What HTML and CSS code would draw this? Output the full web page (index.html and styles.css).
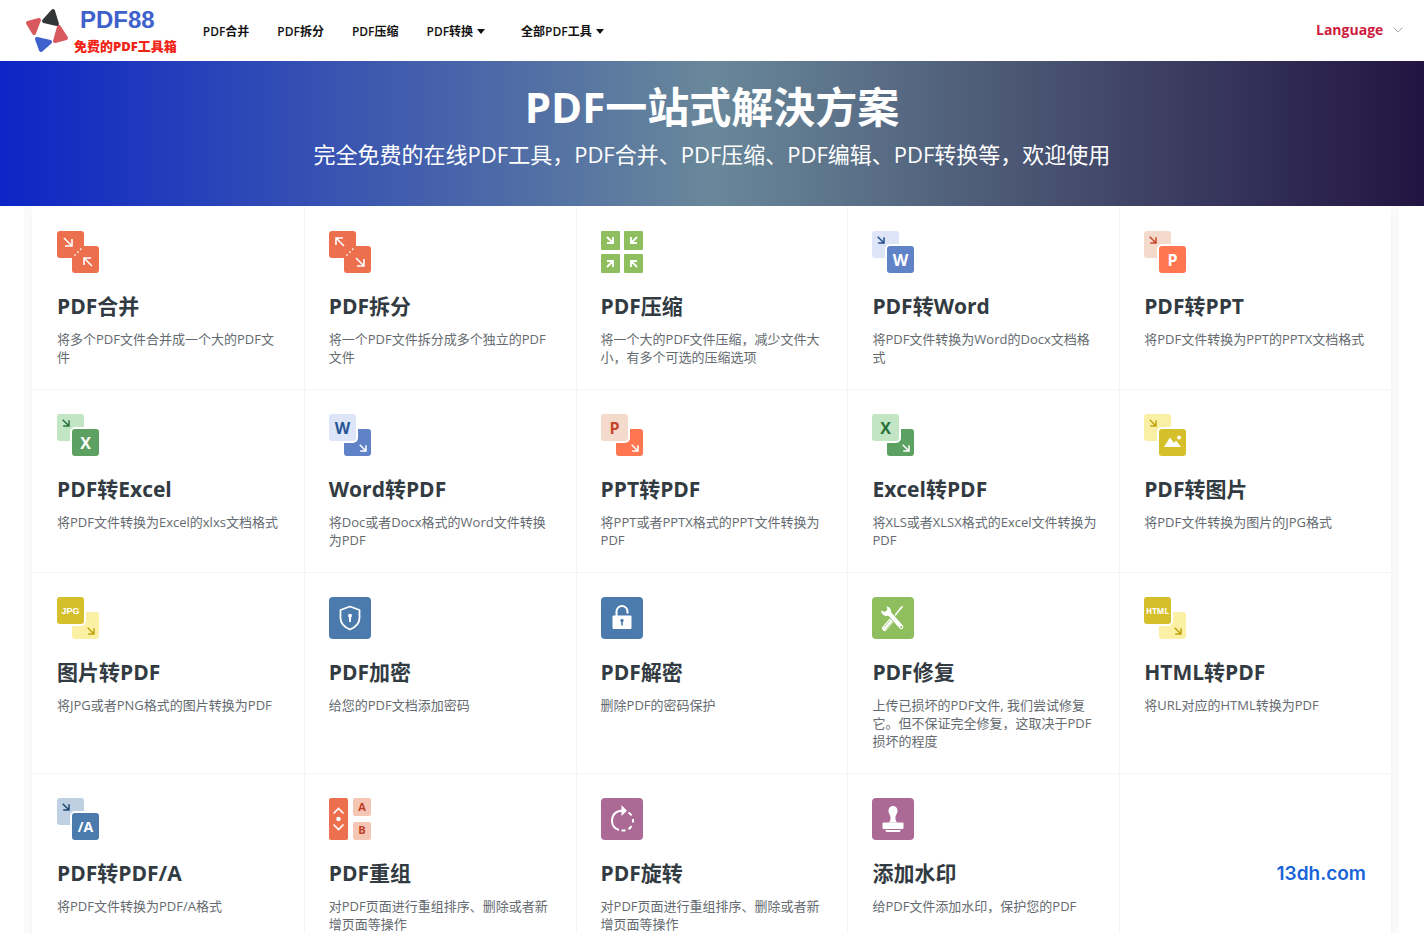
FILE: index.html
```
<!DOCTYPE html>
<html lang="zh-CN">
<head>
    <meta charset="UTF-8">
    <meta name="viewport" content="width=device-width, initial-scale=1.0">
    <title>PDF88 - 免费的PDF工具箱</title>
    <link rel="stylesheet" href="styles.css">
</head>
<body>
    <!-- shared icon parts -->
    <svg class="defs" width="0" height="0" aria-hidden="true">
        <symbol id="arrow" viewBox="0 0 8 8"><path d="M.7.7 7 7M7 1.2V7H1.2" fill="none" stroke="currentColor" stroke-width="1.5"/></symbol>
        <symbol id="caret" viewBox="0 0 8 5"><path d="M0 0h8L4 5z" fill="currentColor"/></symbol>
    </svg>

    <header class="header">
        <a class="logo" href="#">
            <svg width="44" height="46" viewBox="0 0 44 46">
                <g stroke-width="4" stroke-linejoin="round">
                    <path d="M19 13 28 3 32 16z" fill="#343536" stroke="#343536"/>
                    <path d="M3 15 14 12 9 25z" fill="#d95a5e" stroke="#d95a5e"/>
                    <path d="M34 19 41 30 30 33z" fill="#d95a5e" stroke="#d95a5e"/>
                    <path d="M12 31 25 34 16 42z" fill="#3f61cb" stroke="#3f61cb"/>
                </g>
            </svg>
            <span class="logo-text">
                <span class="logo-name">PDF88</span>
                <span class="logo-slogan">免费的PDF工具箱</span>
            </span>
        </a>
        <nav class="nav">
            <a href="#">PDF合并</a>
            <a href="#">PDF拆分</a>
            <a href="#">PDF压缩</a>
            <button type="button">PDF转换<svg width="8" height="5"><use href="#caret"/></svg></button>
            <button type="button">全部PDF工具<svg width="8" height="5"><use href="#caret"/></svg></button>
        </nav>
        <label class="language">
            <select aria-label="Language">
                <option>Language</option>
            </select>
            <svg width="10" height="6" viewBox="0 0 10 6"><path d="M.5.5 5 5 9.5.5" fill="none" stroke="#a4a6ab"/></svg>
        </label>
    </header>

    <section class="banner">
        <h1>PDF一站式解決方案</h1>
        <p>完全免费的在线PDF工具，PDF合并、PDF压缩、PDF编辑、PDF转换等，欢迎使用</p>
    </section>

    <main class="tools">
        <a class="tool" href="#">
            <svg class="icon" viewBox="0 0 42 42">
                <path d="M3 0h21q3 0 3 3v12h12q3 0 3 3v21q0 3-3 3H18q-3 0-3-3V27H3q-3 0-3-3V3q0-3 3-3z" fill="#ec6f4e"/>
                <path d="m7 7 8 8m0-7v7H8M35 35l-8-8m0 7v-7h7" fill="none" stroke="#fff" stroke-width="1.6"/>
                <path d="m17.500 24.500 7-7" stroke="#fff" stroke-width="1.5" stroke-dasharray="1.5 2.600"/>
            </svg>
            <h3>PDF合并</h3>
            <p>将多个PDF文件合并成一个大的PDF文<br>件</p>
        </a>
        <a class="tool" href="#">
            <svg class="icon" viewBox="0 0 42 42">
                <path d="M3 0h21q3 0 3 3v12h12q3 0 3 3v21q0 3-3 3H18q-3 0-3-3V27H3q-3 0-3-3V3q0-3 3-3z" fill="#ec6f4e"/>
                <path d="M15 15 7 7m0 7V7h7M27 27l8 8m0-7v7h-7" fill="none" stroke="#fff" stroke-width="1.6"/>
                <path d="m17.500 24.500 7-7" stroke="#fff" stroke-width="1.5" stroke-dasharray="1.5 2.600"/>
            </svg>
            <h3>PDF拆分</h3>
            <p>将一个PDF文件拆分成多个独立的PDF<br>文件</p>
        </a>
        <a class="tool" href="#">
            <svg class="icon" viewBox="0 0 42 42">
                <path d="M1 1h17v17H1zM24 1h17v17H24zM1 24h17v17H1zM24 24h17v17H24z" fill="#8fbe5f" stroke="#8fbe5f" stroke-width="2" stroke-linejoin="round"/>
                <path d="m6 6 6 6m0-6v6H6M36 6l-6 6m0-6v6h6M6 36l6-6m0 6v-6H6M36 36l-6-6m0 6v-6h6" fill="none" stroke="#fff" stroke-width="1.8"/>
            </svg>
            <h3>PDF压缩</h3>
            <p>将一个大的PDF文件压缩，减少文件大<br>小，有多个可选的压缩选项</p>
        </a>
        <a class="tool" href="#">
            <svg class="icon" viewBox="0 0 42 42">
                <rect width="27" height="27" rx="3" fill="#dee5f9"/>
                <use href="#arrow" x="5" y="5" width="8" height="8" color="#23508f"/>
                <rect class="front" x="14" y="14" width="29" height="29" rx="4" fill="#5f83c6"/>
                <text x="28.5" y="35" fill="#fff">W</text>
            </svg>
            <h3>PDF转Word</h3>
            <p>将PDF文件转换为Word的Docx文档格<br>式</p>
        </a>
        <a class="tool" href="#">
            <svg class="icon" viewBox="0 0 42 42">
                <rect width="27" height="27" rx="3" fill="#f4daca"/>
                <use href="#arrow" x="5" y="5" width="8" height="8" color="#c6472b"/>
                <rect class="front" x="14" y="14" width="29" height="29" rx="4" fill="#ff7651"/>
                <text x="28.5" y="35" fill="#fff">P</text>
            </svg>
            <h3>PDF转PPT</h3>
            <p>将PDF文件转换为PPT的PPTX文档格式</p>
        </a>

        <a class="tool" href="#">
            <svg class="icon" viewBox="0 0 42 42">
                <rect width="27" height="27" rx="3" fill="#c2e6c3"/>
                <use href="#arrow" x="5" y="5" width="8" height="8" color="#28713a"/>
                <rect class="front" x="14" y="14" width="29" height="29" rx="4" fill="#5da162"/>
                <text x="28.5" y="35" fill="#fff">X</text>
            </svg>
            <h3>PDF转Excel</h3>
            <p>将PDF文件转换为Excel的xlxs文档格式</p>
        </a>
        <a class="tool" href="#">
            <svg class="icon" viewBox="0 0 42 42">
                <rect x="15" y="15" width="27" height="27" rx="3" fill="#5f83c6"/>
                <use href="#arrow" x="30" y="30" width="8" height="8" color="#fff"/>
                <rect class="front" x="-1" y="-1" width="29" height="29" rx="4" fill="#dee5f9"/>
                <text x="13.5" y="20" fill="#275596">W</text>
            </svg>
            <h3>Word转PDF</h3>
            <p>将Doc或者Docx格式的Word文件转换<br>为PDF</p>
        </a>
        <a class="tool" href="#">
            <svg class="icon" viewBox="0 0 42 42">
                <rect x="15" y="15" width="27" height="27" rx="3" fill="#ff7651"/>
                <use href="#arrow" x="30" y="30" width="8" height="8" color="#fff"/>
                <rect class="front" x="-1" y="-1" width="29" height="29" rx="4" fill="#f4daca"/>
                <text x="13.5" y="20" fill="#c6472b">P</text>
            </svg>
            <h3>PPT转PDF</h3>
            <p>将PPT或者PPTX格式的PPT文件转换为<br>PDF</p>
        </a>
        <a class="tool" href="#">
            <svg class="icon" viewBox="0 0 42 42">
                <rect x="15" y="15" width="27" height="27" rx="3" fill="#5da162"/>
                <use href="#arrow" x="30" y="30" width="8" height="8" color="#fff"/>
                <rect class="front" x="-1" y="-1" width="29" height="29" rx="4" fill="#c2e6c3"/>
                <text x="13.5" y="20" fill="#28713a">X</text>
            </svg>
            <h3>Excel转PDF</h3>
            <p>将XLS或者XLSX格式的Excel文件转换为<br>PDF</p>
        </a>
        <a class="tool" href="#">
            <svg class="icon" viewBox="0 0 42 42">
                <rect width="27" height="27" rx="3" fill="#faf0a5"/>
                <use href="#arrow" x="5" y="5" width="8" height="8" color="#c0a20b"/>
                <rect class="front" x="14" y="14" width="29" height="29" rx="4" fill="#d5c02c"/>
                <path d="m20 33 6-9.500 4 5.500 2-2.500 5 6.500z" fill="#fff"/>
                <circle cx="35" cy="23.5" r="1.900" fill="#fff"/>
            </svg>
            <h3>PDF转图片</h3>
            <p>将PDF文件转换为图片的JPG格式</p>
        </a>

        <a class="tool" href="#">
            <svg class="icon" viewBox="0 0 42 42">
                <rect x="15" y="15" width="27" height="27" rx="3" fill="#fcf0a4"/>
                <use href="#arrow" x="30" y="30" width="8" height="8" color="#c0a20b"/>
                <rect class="front" x="-1" y="-1" width="29" height="29" rx="4" fill="#d5c02c"/>
                <text class="wide" x="13.5" y="17" fill="#fff">JPG</text>
            </svg>
            <h3>图片转PDF</h3>
            <p>将JPG或者PNG格式的图片转换为PDF</p>
        </a>
        <a class="tool" href="#">
            <svg class="icon" viewBox="0 0 42 42">
                <rect width="42" height="42" rx="4" fill="#4b7bac"/>
                <path d="m21 9.5 9.500 3.500v8q0 7.500-9.500 11.500Q11.500 28.500 11.500 21v-8z" fill="none" stroke="#fff" stroke-width="1.8" stroke-linejoin="round"/>
                <circle cx="21" cy="18.8" r="2" fill="#fff"/>
                <path d="M20 19h2v6h-2z" fill="#fff"/>
            </svg>
            <h3>PDF加密</h3>
            <p>给您的PDF文档添加密码</p>
        </a>
        <a class="tool" href="#">
            <svg class="icon" viewBox="0 0 42 42">
                <rect width="42" height="42" rx="4" fill="#4b7bac"/>
                <path d="M15.500 19v-4.500a5.500 5.500 0 0 1 11 0v2" fill="none" stroke="#fff" stroke-width="2"/>
                <rect x="11.5" y="18.5" width="19" height="13.5" rx="1" fill="#fff"/>
                <circle cx="21" cy="23.5" r="1.7" fill="#4b7bac"/>
                <path d="M20.200 24h1.600v4.500h-1.600z" fill="#4b7bac"/>
            </svg>
            <h3>PDF解密</h3>
            <p>删除PDF的密码保护</p>
        </a>
        <a class="tool" href="#">
            <svg class="icon" viewBox="0 0 42 42">
                <rect width="42" height="42" rx="4" fill="#8fbe5f"/>
                <path d="m19 24-6.500 7.500" stroke="#fff" stroke-width="5" stroke-linecap="round"/>
                <path d="m18 23.500-6 7M20.500 25 14 32.500" stroke="#8fbe5f" stroke-width=".7"/>
                <path d="m21 21 7.500-9.500" stroke="#fff" stroke-width="1.5"/>
                <path d="m27.500 12.500.5-2 2.500-1.800.7.700-1.700 2.600z" fill="#fff"/>
                <path d="m17 16 13 14.500" stroke="#8fbe5f" stroke-width="6"/>
                <path d="m16 15 13.300 15" stroke="#fff" stroke-width="4.200" stroke-linecap="round"/>
                <path d="M14.500 9.200a5.200 5.200 0 0 1 3.500 8.300 5.200 5.200 0 0 1-8.800-3.900l3.800 1.400 2.500-2.300z" fill="#fff"/>
                <circle cx="29.300" cy="30" r="1.100" fill="#8fbe5f"/>
            </svg>
            <h3>PDF修复</h3>
            <p>上传已损坏的PDF文件, 我们尝试修复<br>它。但不保证完全修复，这取决于PDF<br>损坏的程度</p>
        </a>
        <a class="tool" href="#">
            <svg class="icon" viewBox="0 0 42 42">
                <rect x="15" y="15" width="27" height="27" rx="3" fill="#fcf0a4"/>
                <use href="#arrow" x="30" y="30" width="8" height="8" color="#c0a20b"/>
                <rect class="front" x="-1" y="-1" width="29" height="29" rx="4" fill="#d5c02c"/>
                <text class="small" x="13.5" y="16.5" fill="#fff">HTML</text>
            </svg>
            <h3>HTML转PDF</h3>
            <p>将URL对应的HTML转换为PDF</p>
        </a>

        <a class="tool" href="#">
            <svg class="icon" viewBox="0 0 42 42">
                <rect width="27" height="27" rx="3" fill="#bfd0e2"/>
                <use href="#arrow" x="5" y="5" width="8" height="8" color="#1f4a70"/>
                <rect class="front" x="14" y="14" width="29" height="29" rx="4" fill="#4b7bac"/>
                <text class="medium" x="28.5" y="34" fill="#fff">/A</text>
            </svg>
            <h3>PDF转PDF/A</h3>
            <p>将PDF文件转换为PDF/A格式</p>
        </a>
        <a class="tool" href="#">
            <svg class="icon" viewBox="0 0 42 42">
                <rect width="19" height="42" rx="2" fill="#ec6f4e"/>
                <path d="m4.500 15.500 5-5 5 5m-10 11 5 5 5-5" fill="none" stroke="#fff" stroke-width="1.6"/>
                <circle cx="9.500" cy="21" r="2.300" fill="#fff"/>
                <rect x="24" width="18" height="18" rx="2" fill="#f6c6b4"/>
                <rect x="24" y="24" width="18" height="18" rx="2" fill="#f6c6b4"/>
                <text class="letter" x="33" y="13" fill="#bf3d27">A</text>
                <text class="letter" x="33" y="36" fill="#bf3d27">B</text>
            </svg>
            <h3>PDF重组</h3>
            <p>对PDF页面进行重组排序、删除或者新<br>增页面等操作</p>
        </a>
        <a class="tool" href="#">
            <svg class="icon" viewBox="0 0 42 42">
                <rect width="42" height="42" rx="4" fill="#ab6a96"/>
                <path d="M18 32q-7-2-7-9.500Q11.500 13 22 12.500" fill="none" stroke="#fff" stroke-width="2"/>
                <path d="m20.500 7 5.500 5.700-5.500 5.300z" fill="#fff"/>
                <path d="M27.500 14.500q2 1.300 3 3M32 21v3.500M30.500 28q-1 2-3 3M24.500 32.300q-2 .5-4 .2" fill="none" stroke="#fff" stroke-width="2"/>
            </svg>
            <h3>PDF旋转</h3>
            <p>对PDF页面进行重组排序、删除或者新<br>增页面等操作</p>
        </a>
        <a class="tool" href="#">
            <svg class="icon" viewBox="0 0 42 42">
                <rect width="42" height="42" rx="4" fill="#ab6a96"/>
                <path d="M21 8a4.500 4.500 0 0 1 4.500 5c0 3-2.500 4-2 8 .2 2 1 3 2 3.500h-9c1-.5 1.800-1.500 2-3.500.5-4-2-5-2-8A4.500 4.500 0 0 1 21 8z" fill="#fff"/>
                <rect x="10.5" y="24.5" width="21" height="6.5" rx="1" fill="#fff"/>
                <path d="M13 32h16l-1.500 2h-13z" fill="#fff"/>
            </svg>
            <h3>添加水印</h3>
            <p>给PDF文件添加水印，保护您的PDF</p>
        </a>
        <div class="tool tool-site">
            <a href="#">13dh.com</a>
        </div>
    </main>
</body>
</html>
```
FILE: styles.css
```
* {
    box-sizing: border-box;
}
body {
    margin: 0;
    font-family: "Open Sans", "Noto Sans CJK SC", sans-serif;
    background-color: #fff;
    color: #333b42;
}
h1, h3, p {
    margin: 0;
}
a {
    color: inherit;
    text-decoration: none;
}
.defs {
    position: absolute;
}
.header {
    display: flex;
    align-items: center;
    min-height: 61px;
    padding: 0 21px 0 25px;
}
.logo {
    display: flex;
    align-items: center;
    gap: 5px;
}
.logo-text {
    display: flex;
    flex-direction: column;
}
.logo-name {
    padding-left: 6px;
    font: bold 24px/30px "Liberation Sans", sans-serif;
    color: #3f61cb;
}
.logo-slogan {
    font-size: 13px;
    line-height: 22px;
    font-weight: 900;
    color: #f02416;
}
.nav {
    display: flex;
    align-items: center;
    gap: 28px;
    margin-left: 26px;
    padding-top: 2px;
}
.nav a,
.nav button {
    padding: 0;
    border: none;
    background: none;
    font-family: inherit;
    font-size: 12px;
    line-height: 18px;
    font-weight: 600;
    color: #111;
    cursor: pointer;
}
.nav button {
    display: flex;
    align-items: center;
    gap: 4px;
}
.nav button + button {
    margin-left: 8px;
}
.language {
    display: flex;
    align-items: center;
    gap: 9px;
    margin-left: auto;
    padding-bottom: 2px;
}
.language select {
    appearance: none;
    padding: 0;
    border: none;
    background: none;
    font-family: inherit;
    font-size: 14px;
    font-weight: bold;
    color: #cd1c3f;
    cursor: pointer;
}
.banner {
    padding: 16px 20px 34px;
    text-align: center;
    color: #fff;
    background: linear-gradient(90deg, #0d25c6, #69889a 50%, #221442);
}
.banner h1 {
    font-size: 42px;
    line-height: 60px;
    font-weight: bold;
}
.banner p {
    font-size: 22px;
    line-height: 35px;
}
.tools {
    display: grid;
    grid-template-columns: repeat(5, 1fr);
    margin: 0 33px 0 32px;
    background-color: #fff;
    box-shadow: 0 8px 4px 0 #f0f0f0, 0 8px 0 8px #fafafa;
    clip-path: inset(0 -8px -16px -8px);
}
.tool {
    padding: 24px 20px 23px 24px;
    border-top: 1px solid #f5f5f5;
    border-left: 1px solid #f5f5f5;
}
.tool:nth-child(5n + 1) {
    border-left-color: transparent;
}
.tool:nth-child(-n + 5) {
    border-top-color: transparent;
}
.tool:hover {
    background-color: #fafafa;
}
.icon {
    display: block;
    width: 42px;
    height: 42px;
    margin-bottom: 18px;
}
.icon text {
    font-family: "Open Sans", sans-serif;
    font-size: 16px;
    font-weight: bold;
    text-anchor: middle;
}
.icon .front {
    stroke: #fff;
    stroke-width: 2px;
}
.icon .wide {
    font-family: "Liberation Sans", sans-serif;
    font-size: 9px;
}
.icon .small {
    font-size: 8px;
}
.icon .medium {
    font-size: 14px;
}
.icon .letter {
    font-size: 11px;
}
.tool h3 {
    margin-bottom: 9px;
    font-size: 21px;
    line-height: 30px;
    font-weight: bold;
}
.tool p {
    font-size: 13px;
    line-height: 18px;
    color: #646a70;
    white-space: nowrap;
}
.tool-site {
    display: flex;
    align-items: center;
    justify-content: flex-end;
    padding-top: 40px;
    padding-right: 25px;
    font-family: Inter, sans-serif;
    font-size: 19px;
    font-weight: 600;
    color: #1963d9;
}
```
